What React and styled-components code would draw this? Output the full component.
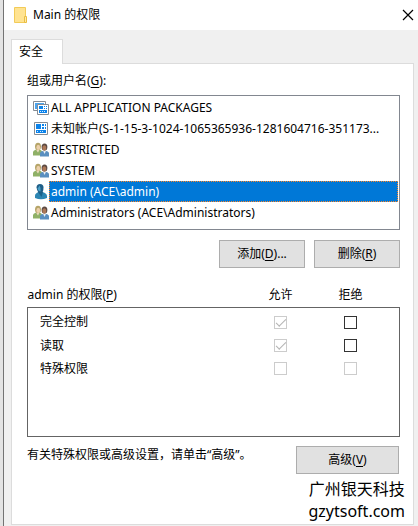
import { useState } from 'react'
import styled, { createGlobalStyle, css } from 'styled-components'

const face = '#f0f0f0';
const line = '#dcdcdc';
const listBorder = '#828790';
const tableBorder = '#646464';
const blue = '#0078d7';

const GlobalStyle = createGlobalStyle`
    *, *::before, *::after {
        box-sizing: border-box;
    }
    body {
        margin: 0;
        background-color: #e3e3e3;
        color: #000;
        font-family: 'Noto Sans', 'Noto Sans CJK SC', sans-serif;
        font-size: 12px;
        line-height: 18px;
    }
    u {
        text-underline-offset: 2px;
    }
`

const Window = styled.main`
    display: flex;
    flex-direction: column;
    min-height: 100vh;
    margin-left: 3px;
    border-left: 1px solid #737373;
    background-color: ${face};
`

const TitleBar = styled.header`
    display: flex;
    align-items: center;
    gap: 6px;
    height: 30px;
    padding: 0 4px 0 10px;
    background-color: white;
`

const Title = styled.h1`
    flex: 1;
    margin: 0;
    font-size: 12px;
    font-weight: 400;
`

const CloseButton = styled.button`
    display: flex;
    padding: 0;
    border: 0;
    background: none;
`

const Body = styled.div`
    display: flex;
    flex: 1;
    flex-direction: column;
    padding: 9px 4px 1px 7px;
`

const Tab = styled.button`
    align-self: flex-start;
    z-index: 1;
    height: 25px;
    margin-bottom: -1px;
    padding: 0 19px 0 7px;
    border: 1px solid ${line};
    border-bottom: 0;
    background-color: white;
    color: inherit;
    font: inherit;
`

const Panel = styled.section`
    position: relative;
    flex: 1;
    padding: 8px 13px 0 15px;
    border: 1px solid ${line};
    background-color: white;
`

const GroupLabel = styled.div`
    margin-bottom: 5px;
`

const ListBox = styled.ul`
    margin: 0;
    padding: 1px 1px 6px;
    border: 1px solid ${listBorder};
    list-style: none;
`

const ListItem = styled.li`
    display: flex;
    align-items: center;
    height: 21px;
    padding-left: 4px;
    cursor: default;
`

const ItemText = styled.span`
    flex: 1;
    min-width: 0;
    padding: 0 4px 0 1px;
    border: 1px solid transparent;
    line-height: 19px;
    overflow: hidden;
    white-space: nowrap;
    text-overflow: ellipsis;

    ${({ $selected }) => $selected && css`
        border: 1px dotted #ff8728;
        background-color: ${blue};
        color: white;
    `}
`

const ButtonRow = styled.div`
    display: flex;
    justify-content: flex-end;
    gap: 9px;
    padding: 10px 0 18px;
`

const Button = styled.button`
    flex-shrink: 0;
    width: ${({ $wide }) => ($wide ? 103 : 86)}px;
    height: 28px;
    padding: 0;
    border: 1px solid #adadad;
    background-color: #e1e1e1;
    color: inherit;
    font: inherit;
`

const PermissionTable = styled.table`
    width: 100%;
    table-layout: fixed;
    border-collapse: collapse;

    & th {
        padding: 0;
        font-weight: 400;
        text-align: left;
    }
    & thead th {
        height: 21px;
        vertical-align: top;
    }
    & thead th:not(:first-child) {
        text-align: center;
    }
    & tbody {
        border: 1px solid ${tableBorder};
    }
    & tbody th {
        padding-left: 12px;
    }
    & td {
        padding: 0;
        text-align: center;
    }
    & tbody tr {
        height: 23px;
    }
    & tbody tr:first-child {
        height: 27px;
    }
    & tbody tr:first-child > * {
        padding-top: 3px;
    }
    & tbody tr:last-child {
        height: 79px;
    }
    & tbody tr:last-child > * {
        padding-bottom: 55px;
    }
`

const Col = styled.col`
    width: ${({ $width }) => $width};
`

const Checkbox = styled.input`
    appearance: none;
    display: block;
    width: 13px;
    height: 13px;
    margin: 0 auto;
    border: 1px solid #333;
    background-color: white;

    &:disabled {
        border-color: #ccc;
    }
    &:checked::before {
        content: '';
        display: block;
        width: 10px;
        height: 5px;
        margin: 2px 0 0 1px;
        border: solid #333;
        border-width: 0 0 1px 1px;
        transform: rotate(-45deg);
    }
    &:checked:disabled::before {
        border-color: #b4b4b4;
    }
`

const Footer = styled.div`
    display: flex;
    justify-content: space-between;
    padding: 9px 1px 48px 0;
`

const Hint = styled.p`
    margin: 0;
`

const Watermark = styled.div`
    position: absolute;
    right: 8px;
    bottom: 2px;
    font-size: 16px;
    line-height: 22px;
    text-align: center;
`

const FolderIcon = () => (
    <svg width="13" height="18" viewBox="0 0 13 18" aria-hidden="true">
        <path d="M.5 1.5h11v15H.5z" fill="#ffe391" stroke="#f2cb58" />
        <path d="M10.5 10.5h2v6h-2z" fill="#ffe9a6" stroke="#e9bd42" />
    </svg>
)

const CloseIcon = () => (
    <svg width="12" height="12" viewBox="0 0 12 12" aria-hidden="true">
        <path d="M1 1l10 10M11 1L1 11" stroke="#000" strokeWidth="1.2" />
    </svg>
)

const PackageIcon = () => (
    <svg width="16" height="16" viewBox="0 0 16 16" aria-hidden="true">
        <path d="M.5 1.500h12v9H.5z" fill="#fff" stroke="#858c94" />
        <path d="M2 3h9v6H2z" fill="#4ba3ed" />
        <path d="M4.500 4.500h11v10h-11z" fill="#fff" stroke="#858c94" />
        <g fill="#0c83ea">
            <path d="M6 6h4v3H6zM11 6h1v1h-1zM13 6h1v1h-1zM11 8h1v1h-1zM13 8h1v1h-1z" />
            <path d="M6 10h8v3H6z" />
        </g>
        <path d="M7 11h1v1H7zM9 11h1v1H9zM11 11h1v1h-1z" fill="#d5eafd" />
    </svg>
)

const AccountIcon = () => (
    <svg width="16" height="16" viewBox="0 0 16 16" aria-hidden="true">
        <path d="M1.500 1.500h13v12h-13z" fill="#fff" stroke="#858c94" />
        <g fill="#0c83ea">
            <path d="M3 3h5v5H3zM9 3h2v2H9zM12 3h1v2h-1zM9 6h2v2H9zM12 6h1v2h-1z" />
            <path d="M3 9h10v3H3z" />
        </g>
        <path d="M4 10h1v1H4zM7 10h1v1H7zM9 10h1v1H9z" fill="#d5eafd" />
    </svg>
)

const GroupIcon = () => (
    <svg width="16" height="16" viewBox="0 0 16 16" aria-hidden="true">
        <path d="M0 13.500V10q0-1.500 3-2.500h3q3 .5 3 2.500v3.500z" fill="#8fb066" />
        <path d="M3 7.500l2 3 1.500-3z" fill="#f3e2c6" />
        <ellipse cx="5" cy="4.500" rx="3" ry="3.800" fill="#b5a468" />
        <ellipse cx="5.300" cy="5.400" rx="1.900" ry="2.600" fill="#ecd0ab" />
        <path d="M7 14.500v-3q0-2 3-2.500h3q3 .5 3 2.500v3z" fill="#5a8fc0" />
        <path d="M10 8.500l1.500 3.500 1.700-3.500z" fill="#e8edf2" />
        <ellipse cx="11.500" cy="5" rx="2.900" ry="3.500" fill="#5d4b43" />
        <ellipse cx="11.300" cy="6" rx="2" ry="2.700" fill="#ac7858" />
    </svg>
)

const UserIcon = () => (
    <svg width="16" height="16" viewBox="0 0 16 16" aria-hidden="true">
        <path d="M2 14V11.500q0-2 3.500-3.500h4q4.500 1.500 4.500 4v2q-6 2.500-12 0z" fill="#2d86b3" />
        <path d="M5 8l3.500 5L10 8z" fill="#1b628b" />
        <path d="M3.500 3.500Q3.500 0 7 0t3.500 3.500Q10.500 9 7.500 9T3.500 3.500z" fill="#205f88" />
        <path d="M4.500 4.500q1-1 2-3 1.500 2 1 6-2.500-.5-3-3z" fill="#4aa0c8" />
    </svg>
)

const accounts = [
    { name: 'ALL APPLICATION PACKAGES', Icon: PackageIcon },
    { name: '未知帐户(S-1-15-3-1024-1065365936-1281604716-351173...', Icon: AccountIcon },
    { name: 'RESTRICTED', Icon: GroupIcon },
    { name: 'SYSTEM', Icon: GroupIcon },
    { name: 'admin (ACE\\admin)', Icon: UserIcon },
    { name: 'Administrators (ACE\\Administrators)', Icon: GroupIcon },
]

const permissions = [
    { name: '完全控制', allow: true, canDeny: true },
    { name: '读取', allow: true, canDeny: true },
    { name: '特殊权限', allow: false, canDeny: false },
]

export default function App() {
    const [selected, setSelected] = useState(4)

    return (
        <>
            <GlobalStyle />
            <Window lang="zh-CN">
                <TitleBar>
                    <FolderIcon />
                    <Title>Main 的权限</Title>
                    <CloseButton type="button" aria-label="关闭"><CloseIcon /></CloseButton>
                </TitleBar>
                <Body>
                    <Tab type="button" role="tab" aria-selected="true">安全</Tab>
                    <Panel>
                        <GroupLabel id="groups">组或用户名(<u>G</u>):</GroupLabel>
                        <ListBox role="listbox" aria-labelledby="groups" tabIndex={0}>
                            {accounts.map(({ name, Icon }, i) => (
                                <ListItem
                                    key={name}
                                    role="option"
                                    aria-selected={i === selected}
                                    onClick={() => setSelected(i)}
                                >
                                    <Icon />
                                    <ItemText $selected={i === selected}>{name}</ItemText>
                                </ListItem>
                            ))}
                        </ListBox>
                        <ButtonRow>
                            <Button type="button">添加(<u>D</u>)...</Button>
                            <Button type="button">删除(<u>R</u>)</Button>
                        </ButtonRow>
                        <PermissionTable>
                            <colgroup>
                                <Col />
                                <Col $width="70px" />
                                <Col $width="70px" />
                                <Col $width="14px" />
                            </colgroup>
                            <thead>
                                <tr>
                                    <th scope="col">admin 的权限(<u>P</u>)</th>
                                    <th scope="col">允许</th>
                                    <th scope="col">拒绝</th>
                                    <td />
                                </tr>
                            </thead>
                            <tbody>
                                {permissions.map(({ name, allow, canDeny }) => (
                                    <tr key={name}>
                                        <th scope="row">{name}</th>
                                        <td>
                                            <Checkbox type="checkbox" aria-label={`${name} 允许`} defaultChecked={allow} disabled />
                                        </td>
                                        <td>
                                            <Checkbox type="checkbox" aria-label={`${name} 拒绝`} disabled={!canDeny} />
                                        </td>
                                        <td />
                                    </tr>
                                ))}
                            </tbody>
                        </PermissionTable>
                        <Footer>
                            <Hint>有关特殊权限或高级设置，请单击“高级”。</Hint>
                            <Button type="button" $wide>高级(<u>V</u>)</Button>
                        </Footer>
                        <Watermark>
                            <div>广州银天科技</div>
                            <div>gzytsoft.com</div>
                        </Watermark>
                    </Panel>
                </Body>
            </Window>
        </>
    )
}
